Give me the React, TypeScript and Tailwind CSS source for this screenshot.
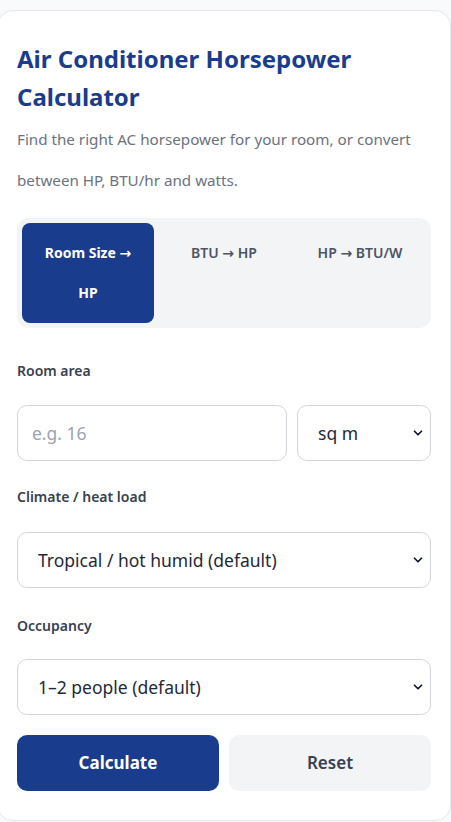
import { ChevronDown } from 'lucide-react';

const font = { fontFamily: '"Noto Sans", "Open Sans", sans-serif' };

function Arrow() {
  return <span style={{ fontFamily: '"DejaVu Sans", sans-serif' }}>→</span>;
}

function Select({ value, options }: { value: string; options: string[] }) {
  return (
    <div className="relative flex-1">
      <select
        defaultValue={value}
        className="h-[56px] w-full appearance-none rounded-[10px] border border-[#d1d5db] bg-white pl-5 pr-10 text-[17.5px] text-[#1f2937] outline-none"
      >
        {options.map((o) => (
          <option key={o}>{o}</option>
        ))}
      </select>
      <ChevronDown
        className="pointer-events-none absolute right-[6px] top-1/2 h-[14px] w-[14px] -translate-y-1/2 text-[#111827]"
        strokeWidth={3}
      />
    </div>
  );
}

export default function App() {
  const tabs = [
    ['Room Size', 'HP'],
    ['BTU', 'HP'],
    ['HP', 'BTU/W'],
  ];

  return (
    <div className="min-h-screen bg-[#f9fafb] pt-[10px]" style={font}>
      <div className="ml-[-3px] rounded-2xl border border-[#e5e7eb] bg-white px-[19px] pb-[29px] pt-[29px]">
        <h1 className="text-[24px] font-bold leading-[38px] text-[#1a3c8c]">
          Air Conditioner Horsepower Calculator
        </h1>
        <p className="mt-[3px] text-[15.2px] leading-[41px] text-[#6b7280]">
          Find the right AC horsepower for your room, or convert between HP, BTU/hr and watts.
        </p>

        <div className="mt-[17px] grid grid-cols-3 gap-1 rounded-xl bg-[#f3f4f6] p-[5px]">
          {tabs.map(([a, b], i) => (
            <div
              key={a + b}
              className={
                i === 0
                  ? 'rounded-lg bg-[#1a3c8c] px-3 py-[10px] text-center text-[14px] font-bold leading-[40px] text-white'
                  : 'rounded-lg px-1 py-[10px] text-center text-[14px] font-semibold leading-[40px] text-[#4b5563]'
              }
            >
              {a} <Arrow /> {b}
            </div>
          ))}
        </div>

        <label className="mt-[33px] block text-[14px] font-semibold leading-5 text-[#374151]">Room area</label>
        <div className="mt-6 flex gap-[10px]">
          <input
            placeholder="e.g. 16"
            className="h-[56px] w-[270px] rounded-[10px] border border-[#d1d5db] bg-white px-[14px] text-[17.5px] text-[#1f2937] outline-none placeholder:text-[#9ca3af]"
          />
          <Select value="sq m" options={['sq m', 'sq ft']} />
        </div>

        <label className="mt-[26px] block text-[14px] font-semibold leading-5 text-[#374151]">
          Climate / heat load
        </label>
        <div className="mt-[25px] flex">
          <Select
            value="Tropical / hot humid (default)"
            options={['Tropical / hot humid (default)', 'Temperate', 'Cool / mild']}
          />
        </div>

        <label className="mt-[28px] block text-[14px] font-semibold leading-5 text-[#374151]">Occupancy</label>
        <div className="mt-[23px] flex">
          <Select value="1–2 people (default)" options={['1–2 people (default)', '3–4 people', '5+ people']} />
        </div>

        <div className="mt-5 flex gap-[10px]">
          <button className="h-[56px] flex-1 rounded-[10px] bg-[#1a3c8c] text-[17px] font-bold text-white">
            Calculate
          </button>
          <button className="h-[56px] flex-1 rounded-[10px] bg-[#f3f4f6] text-[17px] font-semibold text-[#374151]">
            Reset
          </button>
        </div>
      </div>
    </div>
  );
}
